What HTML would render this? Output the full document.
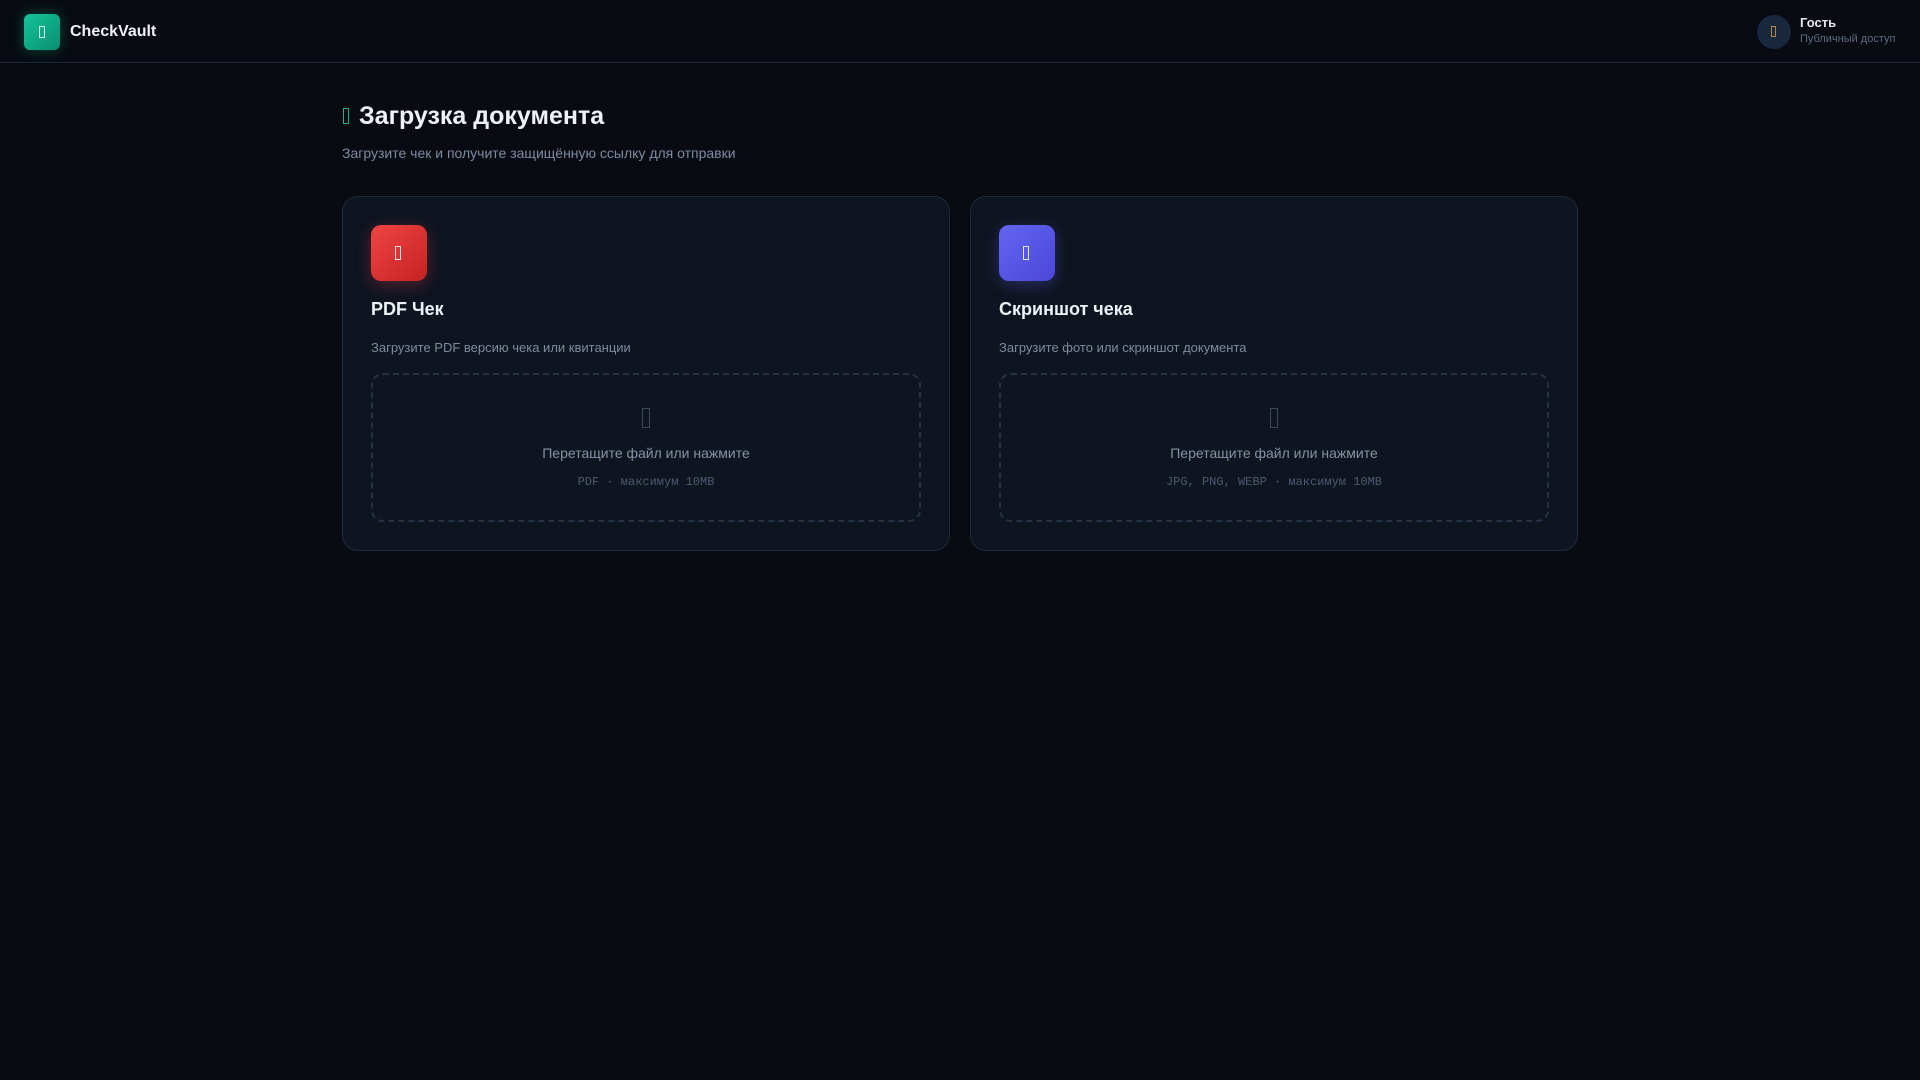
<!DOCTYPE html>
<html><head><meta charset="utf-8"><style>
*{box-sizing:border-box;margin:0;padding:0}
body{width:1920px;height:1080px;background:#080b12;font-family:"Liberation Sans",sans-serif;position:relative;overflow:hidden}
.hdr{position:absolute;left:0;top:0;width:1920px;height:63px;border-bottom:1px solid #1c2738;background:#080b12}
.logo{position:absolute;left:24px;top:14px;width:36px;height:36px;border-radius:6px;background:linear-gradient(135deg,#14c39a,#0a8f70);box-shadow:0 0 14px rgba(16,185,129,.35)}
.tofu{position:absolute;border:1px solid currentColor}
.brand{position:absolute;left:70px;top:23px;font-size:16px;font-weight:bold;color:#eef2f7}
.av{position:absolute;left:1757px;top:15px;width:34px;height:34px;border-radius:50%;background:#17283f}
.g1{position:absolute;left:1800px;top:15px;font-size:13px;font-weight:bold;color:#e5e9ef}
.g2{position:absolute;left:1800px;top:33px;font-size:11px;color:#5d6b80}
h1{position:absolute;left:359px;top:102px;font-size:25px;font-weight:bold;color:#eef2f7}
.sub{position:absolute;left:342px;top:145px;font-size:14px;color:#7d8ba0}
.card{position:absolute;top:196px;width:608px;height:355px;border:1px solid #1e2a3b;border-radius:16px;background:#0e1420}
.ic{position:absolute;left:28px;top:28px;width:56px;height:56px;border-radius:10px}
.ct{position:absolute;left:28px;top:102px;font-size:18px;font-weight:bold;color:#eef2f7}
.cd{position:absolute;left:28px;top:143px;font-size:13px;color:#7d8ba0}
.dz{position:absolute;left:28px;top:176px;width:550px;height:149px;border:2px dashed #253246;border-radius:12px}
.dt{position:absolute;left:0;width:100%;text-align:center;top:70px;font-size:14px;color:#8592a6}
.dm{position:absolute;left:0;width:100%;text-align:center;top:100px;font-size:12px;color:#4d5b70;font-family:"Liberation Mono",monospace}
</style></head><body>
<div class="hdr">
<div class="logo"><span class="tofu" style="left:15px;top:12px;width:6px;height:12px;color:#cdeee4"></span></div>
<div class="brand">CheckVault</div>
<div class="av"><span class="tofu" style="left:14px;top:11px;width:5px;height:11px;color:#b8873a"></span></div>
<div class="g1">Гость</div><div class="g2">Публичный доступ</div>
</div>
<span class="tofu" style="left:343px;top:108px;width:6px;height:16px;color:#10b981"></span>
<h1>Загрузка документа</h1>
<div class="sub">Загрузите чек и получите защищённую ссылку для отправки</div>

<div class="card" style="left:342px">
<div class="ic" style="background:linear-gradient(135deg,#ef4444,#c62222);box-shadow:0 4px 16px rgba(239,68,68,.3)"><span class="tofu" style="left:24px;top:21px;width:6px;height:14px;color:#fde2e2"></span></div>
<div class="ct">PDF Чек</div>
<div class="cd">Загрузите PDF версию чека или квитанции</div>
<div class="dz"><span class="tofu" style="left:269px;top:33px;width:8px;height:20px;color:#3a475a"></span>
<div class="dt">Перетащите файл или нажмите</div><div class="dm">PDF · максимум 10MB</div></div>
</div>

<div class="card" style="left:970px">
<div class="ic" style="background:linear-gradient(135deg,#6366f1,#4b46d8);box-shadow:0 4px 16px rgba(99,102,241,.3)"><span class="tofu" style="left:24px;top:21px;width:6px;height:14px;color:#e4e4fd"></span></div>
<div class="ct">Скриншот чека</div>
<div class="cd">Загрузите фото или скриншот документа</div>
<div class="dz"><span class="tofu" style="left:269px;top:33px;width:8px;height:20px;color:#3a475a"></span>
<div class="dt">Перетащите файл или нажмите</div><div class="dm">JPG, PNG, WEBP · максимум 10MB</div></div>
</div>
</body></html>
